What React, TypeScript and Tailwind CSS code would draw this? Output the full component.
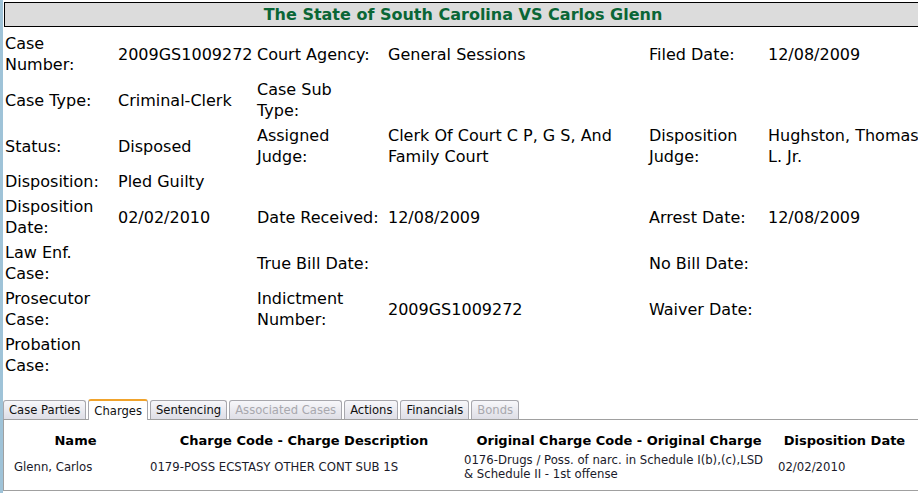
import React from "react";

type Cell = { label: React.ReactNode; value: React.ReactNode };

const rows: Cell[][] = [
  [
    { label: <>Case<br />Number:</>, value: "2009GS1009272" },
    { label: "Court Agency:", value: "General Sessions" },
    { label: "Filed Date:", value: "12/08/2009" },
  ],
  [
    { label: "Case Type:", value: "Criminal-Clerk" },
    { label: <>Case Sub<br />Type:</>, value: "" },
    { label: "", value: "" },
  ],
  [
    { label: "Status:", value: "Disposed" },
    { label: <>Assigned<br />Judge:</>, value: <>Clerk Of Court C P, G S, And<br />Family Court</> },
    { label: <>Disposition<br />Judge:</>, value: <>Hughston, Thomas<br />L. Jr.</> },
  ],
  [
    { label: "Disposition:", value: "Pled Guilty" },
    { label: "", value: "" },
    { label: "", value: "" },
  ],
  [
    { label: <>Disposition<br />Date:</>, value: "02/02/2010" },
    { label: "Date Received:", value: "12/08/2009" },
    { label: "Arrest Date:", value: "12/08/2009" },
  ],
  [
    { label: <>Law Enf.<br />Case:</>, value: "" },
    { label: "True Bill Date:", value: "" },
    { label: "No Bill Date:", value: "" },
  ],
  [
    { label: <>Prosecutor<br />Case:</>, value: "" },
    { label: <>Indictment<br />Number:</>, value: "2009GS1009272" },
    { label: "Waiver Date:", value: "" },
  ],
  [
    { label: <>Probation<br />Case:</>, value: "" },
    { label: "", value: "" },
    { label: "", value: "" },
  ],
];

const tabs = [
  { name: "Case Parties", state: "normal" },
  { name: "Charges", state: "active" },
  { name: "Sentencing", state: "normal" },
  { name: "Associated Cases", state: "disabled" },
  { name: "Actions", state: "normal" },
  { name: "Financials", state: "normal" },
  { name: "Bonds", state: "disabled" },
];

function Tab({ name, state }: { name: string; state: string }) {
  if (state === "active") {
    return (
      <div className="h-[21px] border border-b-0 border-[#a7a7ad] border-t-2 border-t-[#f0a32c] rounded-t-[3px] bg-white px-[5px] pt-[2px] text-[11.6px] leading-[16px] text-[#111] -mb-px relative z-10 whitespace-nowrap">
        {name}
      </div>
    );
  }
  return (
    <div
      className={`h-[19px] border border-b-0 border-[#a7a7ad] rounded-t-[3px] bg-gradient-to-b from-[#f7f7fa] to-[#dedee6] px-[5px] pt-[1px] text-[11.6px] leading-[17px] whitespace-nowrap ${
        state === "disabled" ? "text-[#a8a8ae]" : "text-[#111]"
      }`}
    >
      {name}
    </div>
  );
}

export default function App() {
  return (
    <div className="w-[918px] h-[493px] overflow-hidden bg-white relative" style={{ fontFamily: '"DejaVu Sans", Verdana, sans-serif' }}>
      <div className="absolute left-0 top-0 bottom-0 w-[3px] bg-[#9fc3d8]" />
      <div className="w-[930px] pt-[2px] pl-[4px]">
        <div className="h-[25px] border border-black bg-[#dcdcdc] flex items-center justify-center">
          <h1 className="text-[16px] font-bold text-[#0a6636] leading-none -ml-[8px]">
            The State of South Carolina VS Carlos Glenn
          </h1>
        </div>

        <table className="table-fixed border-collapse mt-[4px] -ml-[1px] text-[16px] leading-[21px] text-black">
          <colgroup>
            <col className="w-[113px]" />
            <col className="w-[139px]" />
            <col className="w-[131px]" />
            <col className="w-[261px]" />
            <col className="w-[119px]" />
            <col className="w-[162px]" />
          </colgroup>
          <tbody>
            {rows.map((r, i) => (
              <tr key={i}>
                {r.map((c, j) => (
                  <React.Fragment key={j}>
                    <td className="px-[2px] py-[2px] align-middle whitespace-nowrap">{c.label}</td>
                    <td className="px-[2px] py-[2px] align-middle whitespace-nowrap">{c.value}</td>
                  </React.Fragment>
                ))}
              </tr>
            ))}
          </tbody>
        </table>

        <div className="mt-[21px] -ml-[1px]">
          <div className="flex items-end gap-[2px] border-b border-[#a0a0a0] h-[21px]">
            {tabs.map((t) => (
              <Tab key={t.name} name={t.name} state={t.state} />
            ))}
          </div>
          <div className="border-l border-b border-[#a0a0a0] h-[71px] pt-[12px]">
            <table className="table-fixed border-collapse" style={{ width: 912 }}>
              <colgroup>
                <col className="w-[143px]" />
                <col className="w-[314px]" />
                <col className="w-[316px]" />
                <col className="w-[139px]" />
              </colgroup>
              <thead>
                <tr className="text-[13px] font-bold text-black leading-[18px]">
                  <th className="text-center px-[2px] whitespace-nowrap">Name</th>
                  <th className="text-center px-[2px] whitespace-nowrap">Charge Code - Charge Description</th>
                  <th className="text-center px-[2px] whitespace-nowrap">Original Charge Code - Original Charge</th>
                  <th className="text-center pl-[2px] pr-[6px] whitespace-nowrap">Disposition Date</th>
                </tr>
              </thead>
              <tbody>
                <tr className="text-[11.7px] text-[#1a1a2a] leading-[14px]">
                  <td className="pl-[10px] pt-[3px] align-middle whitespace-nowrap">Glenn, Carlos</td>
                  <td className="pl-[3px] pt-[3px] align-middle whitespace-nowrap">0179-POSS ECSTASY OTHER CONT SUB 1S</td>
                  <td className="pl-[3px] pt-[3px] align-middle whitespace-nowrap">
                    0176-Drugs / Poss. of narc. in Schedule I(b),(c),LSD
                    <br />& Schedule II - 1st offense
                  </td>
                  <td className="pl-[1px] pt-[3px] align-middle whitespace-nowrap">02/02/2010</td>
                </tr>
              </tbody>
            </table>
          </div>
        </div>
      </div>
    </div>
  );
}
